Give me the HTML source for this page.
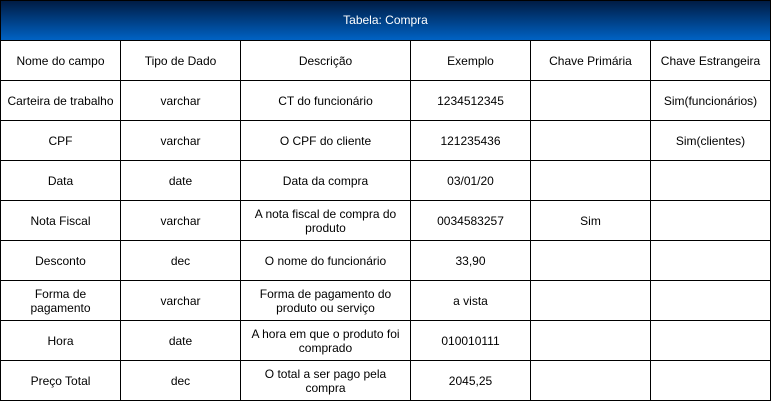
<!DOCTYPE html>
<html><head><meta charset="utf-8"><style>
html,body{margin:0;padding:0;background:#fff;width:771px;height:401px;overflow:hidden}
body{position:relative;font-family:"Liberation Sans",Arial,sans-serif;font-size:12px;color:#000}
.hdr{position:absolute;left:0;top:0;width:769px;height:39px;border:1px solid #000;border-bottom:none;background:linear-gradient(#001c44,#0062c4);color:#fff;text-align:center;line-height:39px;font-size:12px}
.h{position:absolute;left:0;width:771px;height:1px;background:#000}
.v{position:absolute;top:40px;height:361px;width:1px;background:#000}
.c{position:absolute;display:flex;align-items:center;justify-content:center;text-align:center;height:39px;line-height:14px}
</style></head><body>
<div class="hdr">Tabela: Compra</div>
<div class="h" style="top:40px"></div><div class="h" style="top:80px"></div><div class="h" style="top:120px"></div><div class="h" style="top:160px"></div><div class="h" style="top:200px"></div><div class="h" style="top:240px"></div><div class="h" style="top:280px"></div><div class="h" style="top:320px"></div><div class="h" style="top:360px"></div><div class="h" style="top:400px"></div>
<div class="v" style="left:0"></div><div class="v" style="left:120px"></div><div class="v" style="left:240px"></div><div class="v" style="left:410px"></div><div class="v" style="left:530px"></div><div class="v" style="left:650px"></div><div class="v" style="left:770px"></div>
<div id="t"></div>
<script>
var cols=[[1,119],[121,119],[241,169],[411,119],[531,119],[651,119]];
var rows=[
["Nome do campo","Tipo de Dado","Descrição","Exemplo","Chave Primária","Chave Estrangeira"],
["Carteira de trabalho","varchar","CT do funcionário","1234512345","","Sim(funcionários)"],
["CPF","varchar","O CPF do cliente","121235436","","Sim(clientes)"],
["Data","date","Data da compra","03/01/20","",""],
["Nota Fiscal","varchar","A nota fiscal de compra do<br>produto","0034583257","Sim",""],
["Desconto","dec","O nome do funcionário","33,90","",""],
["Forma de<br>pagamento","varchar","Forma de pagamento do<br>produto ou serviço","a vista","",""],
["Hora","date","A hora em que o produto foi<br>comprado","010010111","",""],
["Preço Total","dec","O total a ser pago pela<br>compra","2045,25","",""]];
var h="";
rows.forEach(function(r,i){r.forEach(function(t,j){h+='<div class="c" style="left:'+cols[j][0]+'px;width:'+cols[j][1]+'px;top:'+(41+i*40)+'px">'+t+'</div>';});});
document.getElementById("t").innerHTML=h;
</script>
</body></html>
